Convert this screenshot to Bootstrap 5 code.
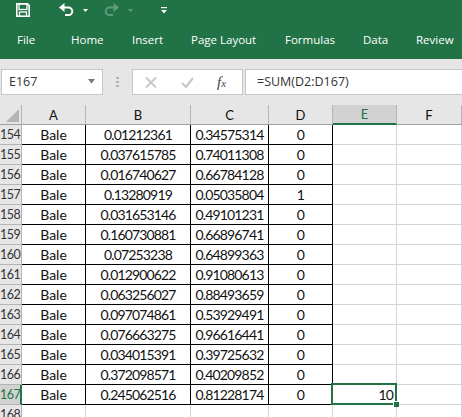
<!DOCTYPE html>
<html lang="en"><head><meta charset="utf-8">
<link href="https://cdn.jsdelivr.net/npm/bootstrap@5.3.0/dist/css/bootstrap.min.css" rel="stylesheet">
<script src="https://cdn.jsdelivr.net/npm/bootstrap@5.3.0/dist/js/bootstrap.bundle.min.js"></script>
<style>
html,body{margin:0;height:417px;overflow:hidden;background:#e6e6e6;font-family:"Open Sans","Liberation Sans",sans-serif;}
.ribbon{background:#217346;height:59px;color:#fff;}
.qat{height:20px;}
.qat svg{display:block;}
.qat-save{margin-left:16px;}
.qat-undo{margin-left:29px;}
.qat-redo{margin-left:16px;}
.qat-more{margin-left:28px;}
.caret-w{margin-left:9px;}
.tabs{height:39px;padding:7px 0 0 17px;font-size:11.5px;line-height:25px;}
.tab{white-space:nowrap;display:block;}
.tab:nth-child(1){width:54px}.tab:nth-child(2){width:61px}.tab:nth-child(3){width:59px}.tab:nth-child(4){width:94px}.tab:nth-child(5){width:78px}.tab:nth-child(6){width:53px}
.fbar{height:46px;background:#e6e6e6;}
.namebox{margin:10px 0 0 1px;width:102px;height:26px;background:#fff;border:1px solid #c6c6c6;font-size:12.5px;line-height:24px;padding-left:7px;color:#333;}
.namebox svg{margin:9px 7px 0 0;}
.grip{width:3px;margin:18px 0 0 13px;}
.grip i{display:block;width:3px;height:2px;background:#b4b4b4;margin-bottom:2px;}
.fnbtns{margin:10px 0 0 13px;width:111px;height:26px;background:#fff;border:1px solid #c6c6c6;}
.fn-x{margin-left:12px}.fn-ok{margin-left:24px}
.fn-fx{margin-left:23px;font:italic 400 15px "Liberation Serif",serif;color:#444}
.fn-fx span{font-size:11px}
.formula{margin:10px 0 0 2px;flex:1;height:26px;background:#fff;border:1px solid #c6c6c6;border-right:0;font-size:12.5px;line-height:24px;padding-left:11px;color:#333;}
.sheet{width:462px;border-collapse:separate;border-spacing:0;table-layout:fixed;background:#fff;font-family:Lato,"Open Sans",sans-serif;font-size:14px;color:#111;}
.sheet col:nth-child(1){width:22px}.sheet col:nth-child(2){width:64px}.sheet col:nth-child(3){width:105px}.sheet col:nth-child(4){width:78px}.sheet col:nth-child(5){width:64px}.sheet col:nth-child(6){width:64px}.sheet col:nth-child(7){width:65px}
.sheet th,.sheet td{padding:0;font-weight:400;text-align:center;height:20px;line-height:19px;border-right:1px solid #d4d4d4;border-bottom:1px solid #d4d4d4;overflow:hidden;white-space:nowrap;}
.sheet td.n{letter-spacing:-.85px;}
.sheet thead th{height:19px;background:#e6e6e6;border-right:1px solid #b4b4b4;border-bottom:1px solid #9f9f9f;line-height:18px;font-size:13px;}
.sheet tbody th{background:#e6e6e6;border-right:1px solid #b4b4b4;border-bottom:1px solid #b4b4b4;text-align:right;padding-right:1px;color:#333;font-size:12.5px;letter-spacing:-.5px;}
.sheet td.b{border-color:#000;}
.sheet thead th.sel{background:#d2d2d2;color:#217346;border-bottom:2px solid #217346;}
.sheet tbody th.sel{background:#d2d2d2;color:#217346;border-right:2px solid #217346;padding-right:0;}
.sheet td.cur{position:relative;overflow:visible;text-align:right;padding-right:3px;}
.frame{position:absolute;left:-2px;top:-2px;right:-1px;bottom:-1px;border:2px solid #217346;}
.handle{position:absolute;right:-3px;bottom:-3px;width:5px;height:5px;background:#217346;box-shadow:-1px -1px 0 #fff;}
.sheet tbody tr.last>*{height:12px;}
.cornertri{display:block;margin:2px 0 0 6px;}
</style></head><body>
<div class="ribbon">
<div class="qat d-flex align-items-center">
<svg class="qat-save" width="14" height="14" viewBox="0 0 14 14"><path d="M.8.8h10.600l1.800 1.800v10.600H.8z" fill="none" stroke="#fff" stroke-width="1.600"/><rect x="3" y="1" width="8" height="5.500" fill="none" stroke="#fff" stroke-width="1.300"/><rect x="3.500" y="9" width="7" height="4.500" fill="none" stroke="#fff" stroke-width="1.300"/></svg>
<svg class="qat-undo" width="15" height="14" viewBox="0 0 15 14"><path d="M5 4.500h4.500a3.800 3.800 0 0 1 0 7.600H6" fill="none" stroke="#fff" stroke-width="2"/><path d="M0 4.500L5.500 0V9z" fill="#fff"/></svg>
<svg class="caret-w" width="5" height="3" viewBox="0 0 5 3"><path d="M0 0h5L2.500 3z" fill="#fff"/></svg>
<svg class="qat-redo" width="15" height="14" viewBox="0 0 15 14"><path d="M10 4.500H5.500a3.800 3.800 0 0 0 0 7.600H9" fill="none" stroke="#5f9c7c" stroke-width="2"/><path d="M15 4.500L9.500 0V9z" fill="#5f9c7c"/></svg>
<svg class="caret-w" width="5" height="3" viewBox="0 0 5 3"><path d="M0 0h5L2.500 3z" fill="#5f9c7c"/></svg>
<svg class="qat-more" width="6" height="7" viewBox="0 0 6 7"><rect width="6" height="1.200" fill="#fff"/><path d="M0 3h6L3 6.500z" fill="#fff"/></svg>
</div>
<div class="tabs d-flex">
<span class="tab">File</span><span class="tab">Home</span><span class="tab">Insert</span><span class="tab">Page Layout</span><span class="tab">Formulas</span><span class="tab">Data</span><span class="tab">Review</span>
</div>
</div>
<div class="fbar d-flex">
<div class="namebox d-flex justify-content-between"><span>E167</span><svg width="7" height="5" viewBox="0 0 7 5"><path d="M0 0h7L3.500 4.500z" fill="#777"/></svg></div>
<div class="grip"><i></i><i></i><i></i></div>
<div class="fnbtns d-flex align-items-center">
<svg class="fn-x" width="12" height="11" viewBox="0 0 12 11"><path d="M1 .5l10 10M11 .5l-10 10" stroke="#c8c8c8" stroke-width="2"/></svg>
<svg class="fn-ok" width="13" height="11" viewBox="0 0 13 11"><path d="M1 6l4 4 7-9" fill="none" stroke="#c8c8c8" stroke-width="2.200"/></svg>
<span class="fn-fx">f<span>x</span></span>
</div>
<div class="formula">=SUM(D2:D167)</div>
</div>
<table class="sheet">
<colgroup><col><col><col><col><col><col><col></colgroup>
<thead><tr><th><svg class="cornertri" width="13" height="13" viewBox="0 0 13 13"><path d="M13 0v13H0z" fill="#b4b4b4"/></svg></th><th>A</th><th>B</th><th>C</th><th>D</th><th class="sel">E</th><th>F</th></tr></thead>
<tbody id="r"></tbody></table>
<script>
var d=[[154,"0.01212361","0.34575314",0],[155,"0.037615785","0.74011308",0],[156,"0.016740627","0.66784128",0],[157,"0.13280919","0.05035804",1],[158,"0.031653146","0.49101231",0],[159,"0.160730881","0.66896741",0],[160,"0.07253238","0.64899363",0],[161,"0.012900622","0.91080613",0],[162,"0.063256027","0.88493659",0],[163,"0.097074861","0.53929491",0],[164,"0.076663275","0.96616441",0],[165,"0.034015391","0.39725632",0],[166,"0.372098571","0.40209852",0],[167,"0.245062516","0.81228174",0]];
var h="";d.forEach(function(x){var l=x[0]==167;h+='<tr><th'+(l?' class="sel"':'')+'>'+x[0]+'</th><td class="b">Bale</td><td class="b n">'+x[1]+'</td><td class="b n">'+x[2]+'</td><td class="b n">'+x[3]+'</td>'+(l?'<td class="cur n">10<span class="frame"></span><span class="handle"></span></td>':'<td></td>')+'<td></td></tr>';});
h+='<tr class="last"><th>168</th><td></td><td></td><td></td><td></td><td></td><td></td></tr>';
document.getElementById("r").innerHTML=h;
</script>
</body></html>
